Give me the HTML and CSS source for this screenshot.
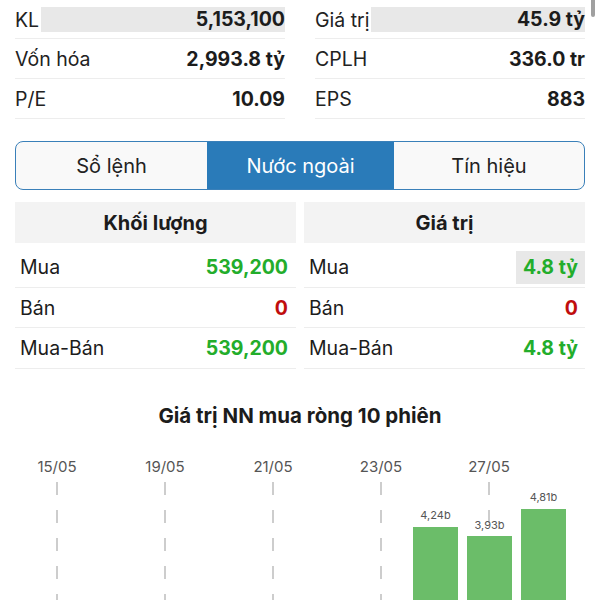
FILE: index.html
```html
<!DOCTYPE html>
<html lang="vi">
<head>
<meta charset="utf-8">
<link rel="stylesheet" href="styles.css">
</head>
<body>
<div class="scrollbar"></div>
<div class="wrap">
  <div class="stats">
    <div class="col">
      <div class="row"><span class="lbl">KL</span><span class="val hl">5,153,100</span></div>
      <div class="row"><span class="lbl">Vốn hóa</span><span class="val">2,993.8 tỷ</span></div>
      <div class="row"><span class="lbl">P/E</span><span class="val">10.09</span></div>
    </div>
    <div class="col">
      <div class="row"><span class="lbl">Giá trị</span><span class="val hl">45.9 tỷ</span></div>
      <div class="row"><span class="lbl">CPLH</span><span class="val">336.0 tr</span></div>
      <div class="row"><span class="lbl">EPS</span><span class="val">883</span></div>
    </div>
  </div>

  <div class="tabs">
    <div class="tab">Sổ lệnh</div>
    <div class="tab active">Nước ngoài</div>
    <div class="tab">Tín hiệu</div>
  </div>

  <div class="tables">
    <div class="tbl">
      <div class="thead">Khối lượng</div>
      <div class="trow"><span>Mua</span><span class="num up">539,200</span></div>
      <div class="trow"><span>Bán</span><span class="num down">0</span></div>
      <div class="trow"><span>Mua-Bán</span><span class="num up">539,200</span></div>
    </div>
    <div class="tbl tbl-right">
      <div class="thead">Giá trị</div>
      <div class="trow"><span>Mua</span><span class="num up flash">4.8 tỷ</span></div>
      <div class="trow"><span>Bán</span><span class="num down">0</span></div>
      <div class="trow"><span>Mua-Bán</span><span class="num up">4.8 tỷ</span></div>
    </div>
  </div>

  <h2 class="chart-title">Giá trị NN mua ròng 10 phiên</h2>
</div>

<svg class="chart" width="600" height="160" viewBox="0 0 600 160">
  <g class="dates">
    <text x="57" y="32">15/05</text>
    <text x="165" y="32">19/05</text>
    <text x="273" y="32">21/05</text>
    <text x="381" y="32">23/05</text>
    <text x="489" y="32">27/05</text>
  </g>
  <g class="grid">
    <line x1="57" y1="42" x2="57" y2="160"/>
    <line x1="165" y1="42" x2="165" y2="160"/>
    <line x1="273" y1="42" x2="273" y2="160"/>
    <line x1="381" y1="42" x2="381" y2="160"/>
    <line x1="489" y1="42" x2="489" y2="160"/>
  </g>
  <g class="bars">
    <rect x="413" y="87" width="45" height="80"/>
    <rect x="467" y="96" width="45" height="70"/>
    <rect x="521" y="69" width="45" height="100"/>
  </g>
  <g class="blabels">
    <text x="435.5" y="79">4,24b</text>
    <text x="489.5" y="89">3,93b</text>
    <text x="543.5" y="61">4,81b</text>
  </g>
</svg>
</body>
</html>
```

FILE: styles.css
```css
* { box-sizing: border-box; }
html, body { margin: 0; padding: 0; background: #fff; }
body {
  font-family: Inter, "Noto Sans", sans-serif;
  font-size: 19.5px;
  color: #1c1c1c;
  width: 600px;
  overflow: hidden;
  position: relative;
}
.scrollbar {
  position: absolute;
  top: 0;
  left: 591px;
  width: 4px;
  height: 17px;
  border-radius: 0 0 2px 2px;
  background: #a0a0a0;
}
.wrap { padding: 0 15px; }

.stats {
  display: grid;
  grid-template-columns: 270px 270px;
  column-gap: 30px;
}
.row {
  display: flex;
  align-items: center;
  height: 40px;
  padding-top: 1px;
  border-bottom: 1px solid #ededed;
}
.col .row:first-child { height: 39px; }
.lbl { color: #222; white-space: nowrap; }
.val {
  flex: 1;
  text-align: right;
  font-weight: 700;
  color: #1c1c1c;
}
.val.hl {
  background: #e8e8e8;
  height: 25px;
  line-height: 25px;
  margin-left: 2px;
}

.tabs {
  display: grid;
  grid-template-columns: 191px 187px 1fr;
  margin-top: 22px;
  height: 49px;
  border: 1.5px solid #3a80b9;
  border-radius: 8px;
  overflow: hidden;
  background: #f9f9f9;
  font-size: 20px;
}
.tab {
  display: flex;
  align-items: center;
  justify-content: center;
  color: #222;
}
.tab.active {
  background: #2a7bb9;
  color: #fff;
}

.tables {
  display: grid;
  grid-template-columns: 281px 281px;
  column-gap: 8px;
  margin-top: 12px;
}
.thead {
  height: 41px;
  background: #f3f3f3;
  display: flex;
  align-items: center;
  justify-content: center;
  font-weight: 700;
  font-size: 20px;
  margin-bottom: 4px;
}
.trow {
  display: flex;
  align-items: center;
  justify-content: space-between;
  height: 40.5px;
  padding: 1px 8px 0 5px;
  border-bottom: 1px solid #ededed;
}
.tbl-right .trow { padding-right: 0; }
.tbl-right .num { padding-right: 7px; }
.num { font-weight: 700; }
.up { color: #23ad2b; }
.down { color: #c00d0d; }
.flash {
  background: #e8e8e8;
  height: 33px;
  line-height: 33px;
  padding-left: 7px;
}

.chart-title {
  margin: 35px 0 0;
  font-size: 20.5px;
  line-height: 24px;
  font-weight: 700;
  text-align: center;
  color: #1c1c1c;
}
.chart {
  display: block;
  margin-top: 12px;
}
.dates text {
  font-family: Inter, "Noto Sans", sans-serif;
  font-size: 15px;
  fill: #555;
  text-anchor: middle;
}
.grid line {
  stroke: #bdbdbd;
  stroke-width: 1.5;
  stroke-dasharray: 13 15;
}
.bars rect { fill: #6bbd69; }
.blabels text {
  font-family: Inter, "Noto Sans", sans-serif;
  font-size: 11px;
  fill: #555;
  text-anchor: middle;
}
```
